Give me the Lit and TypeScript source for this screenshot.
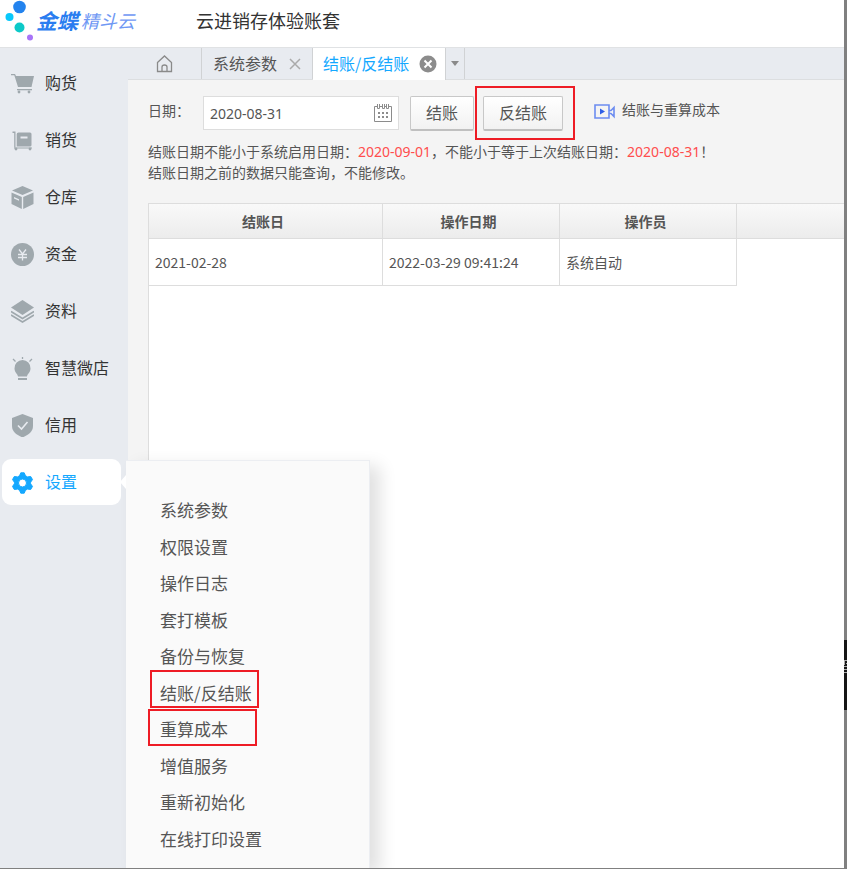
import { LitElement, html, css, svg, nothing } from "lit";
import { customElement, state } from "lit/decorators.js";
import { classMap } from "lit/directives/class-map.js";

const icons = {
  cart: svg`<path d="M0 2h4l1 2h18l-2.500 11H7L3.300 3.300H0z"/><path d="M6 17h15v1.300H6z"/><circle cx="8" cy="20" r="1.400"/><circle cx="18" cy="20" r="1.400"/>`,
  trolley: svg`<path d="M1.500 2.500h3v16H3.200V4H1.500z"/><path fill-rule="evenodd" d="M7.500 3.500h11.500q1.500 0 1.500 1.500v11q0 1.500-1.500 1.500H5.700V5.300q0-1.800 1.800-1.800zM9.500 7.500v2h7v-2z"/><path d="M3 18.500h18v1H3z"/><circle cx="5" cy="20" r="1.400"/><circle cx="19" cy="20" r="1.400"/>`,
  box: svg`<path d="M11.500 0 22 4.500 11.500 9 1 4.500z"/><path fill-rule="evenodd" d="M.5 6.500l10.300 4.500v12L.5 18zM3 12.500l5 2.300v-1.500L3 11z"/><path d="M22.500 6.500l-10.300 4.500v12l10.300-5z"/>`,
  money: svg`<circle cx="11.500" cy="11.500" r="11.500"/><path d="M8 6.500l3.500 4.500L15 6.500M7 11.500h9M7 14.500h9M11.500 11v6.500" fill="none" stroke="#e8ebf0" stroke-width="1.300"/>`,
  layers: svg`<path d="M11.500 0 23 7.500 11.500 15 0 7.500z"/><path d="M0 11.500l11.500 7 11.500-7M0 15l11.500 7L23 15" fill="none" stroke="currentColor" stroke-width="1.600"/>`,
  bulb: svg`<path d="M11.500 3a8 8 0 0 1 8 8.500c0 4-3 5-3.500 8H7c-.5-3-3.500-4-3.500-8a8 8 0 0 1 8-8.500zM7 21h9v2H7z"/><path d="M11.500 0v2M2 2l2.500 2.500M21 2l-2.500 2.500" stroke="currentColor" stroke-width="1.300"/>`,
  shield: svg`<path d="M11.500 0 22 4v8c0 6-5 9-10.500 11.500C6 21 1 18 1 12V4z"/><path d="M7 11.500l3.500 3.500L16.500 8" fill="none" stroke="#e8ebf0" stroke-width="1.600"/>`,
  gear: svg`<path fill-rule="evenodd" d="M9.800 1.800h3.400l1.300 3 2 1.100 3.200-.4 1.800 3.100-1.900 2.600v1.600l1.900 2.600-1.800 3.100-3.200-.4-2 1.100-1.300 3H9.800l-1.300-3-2-1.100-3.200.4-1.800-3.100 1.900-2.600v-1.600L1.500 8.600l1.800-3.100 3.200.4 2-1.100zM11.500 8a4 4 0 1 0 0 8 4 4 0 0 0 0-8z" stroke="currentColor" stroke-width="1" stroke-linejoin="round"/>`,
};

const sections = [
  { label: "购货", icon: icons.cart },
  { label: "销货", icon: icons.trolley },
  { label: "仓库", icon: icons.box },
  { label: "资金", icon: icons.money },
  { label: "资料", icon: icons.layers },
  { label: "智慧微店", icon: icons.bulb },
  { label: "信用", icon: icons.shield },
  { label: "设置", icon: icons.gear },
];

const settings = [
  { label: "系统参数" },
  { label: "权限设置" },
  { label: "操作日志" },
  { label: "套打模板" },
  { label: "备份与恢复" },
  { label: "结账/反结账", mark: "mark upper" },
  { label: "重算成本", mark: "mark lower" },
  { label: "增值服务" },
  { label: "重新初始化" },
  { label: "在线打印设置" },
];

const rows = [["2021-02-28", "2022-03-29 09:41:24", "系统自动"]];

@customElement("app-root")
export class AppRoot extends LitElement {
  @state() private active = "设置";

  static styles = css`
    :host {
      display: flex;
      flex-direction: column;
      position: relative;
      box-sizing: border-box;
      min-height: 100vh;
      border-right: 3px solid #808080;
      border-bottom: 1px solid #808080;
      background: #fff;
      color: #555;
      font: 14px/20px "Noto Sans CJK SC", sans-serif;
    }
    *, *::before, *::after { box-sizing: border-box; }
    button, input { font: inherit; color: inherit; margin: 0; }
    button { cursor: pointer; }
    a { color: inherit; text-decoration: none; }
    svg { display: block; flex: none; }
    ul { list-style: none; margin: 0; padding: 0; }

    header {
      display: flex;
      align-items: center;
      height: 48px;
      padding-bottom: 8px;
      border-bottom: 1px solid #e0e2e4;
    }
    .brand { display: flex; align-items: center; width: 196px; padding-left: 4px; font-style: italic; }
    .brand svg { margin-top: 2px; }
    .brand strong { margin-left: 2px; font-size: 21px; line-height: 40px; color: #2a7df0; }
    .brand span { margin-left: 3px; font-size: 18px; line-height: 40px; color: #6f98f4; }
    h1 { margin: 0; font-size: 18px; line-height: 40px; font-weight: 400; color: #333; }

    .body { display: flex; flex: 1; }
    aside { position: relative; flex: none; width: 128px; padding: 12px 7px 0 2px; background: #e8ebf0; }
    .sections { display: grid; gap: 11px; }
    .section {
      display: flex;
      align-items: center;
      gap: 11px;
      height: 46px;
      padding: 0 0 2px 9px;
      border-radius: 9px;
      font-size: 16px;
      color: #333;
    }
    .section svg { margin-top: 2px; color: #9fa8ad; }
    .section.active { background: #fff; color: #14a8ff; }
    .section.active svg { color: #14a8ff; }

    .menu {
      position: absolute;
      z-index: 2;
      left: 126px;
      top: 412px;
      bottom: 0;
      width: 244px;
      padding: 31px 0 0 34px;
      border: 1px solid #eceef2;
      border-width: 1px 1px 0 0;
      background: #fafafa;
      box-shadow: 10px 6px 16px rgba(0, 0, 0, 0.12);
      clip-path: inset(-20px -40px 0 -10px);
      font-size: 17px;
    }
    .menu::before {
      content: "";
      position: absolute;
      left: -6px;
      top: 14px;
      border: 7px solid transparent;
      border-left-width: 0;
      border-right: 6px solid #fff;
    }
    .menu ul { display: grid; grid-auto-rows: 1fr; height: 365px; }
    .menu li { display: flex; align-items: center; position: relative; }
    .mark::after {
      content: "";
      position: absolute;
      width: 109px;
      height: 38px;
      border: 2px solid #ee1c25;
      pointer-events: none;
    }
    .upper::after { left: -10px; bottom: 3px; }
    .lower::after { left: -12px; bottom: 2px; height: 37px; }

    main { display: flex; flex-direction: column; flex: 1; min-width: 0; background: #f4f4f4; }
    .tabs {
      display: flex;
      height: 32px;
      border-bottom: 1px solid #dcdee0;
      background: #e8ebf0;
      font-size: 16px;
    }
    .tab { display: flex; align-items: center; border-right: 1px solid #d0d2d4; }
    .tab button { display: flex; padding: 0; border: 0; background: none; }
    .tab .name { padding-bottom: 2px; }
    .home { width: 74px; padding-left: 28px; }
    .params { width: 111px; padding-left: 11px; gap: 12px; }
    .current { height: 32px; width: 133px; padding-left: 10px; gap: 10px; background: #fff; color: #14a8ff; }
    .more { width: 19px; justify-content: center; }

    .toolbar { display: flex; align-items: center; height: 36px; margin: 15px 0 0 20px; }
    .toolbar label { width: 55px; padding-bottom: 6px; }
    .date { display: flex; position: relative; width: 196px; }
    .date input {
      width: 100%;
      height: 34px;
      padding: 0 32px 0 6px;
      border: 1px solid #ddd;
      background: #fff;
      font-family: "Noto Sans", sans-serif;
      outline: none;
    }
    .date svg { position: absolute; right: 7px; top: 7px; }
    .action {
      height: 35px;
      margin-left: 11px;
      padding: 0 15px;
      border: 1px solid #c8c8c8;
      border-bottom: 2px solid #c0c0c0;
      border-radius: 2px;
      background: linear-gradient(#fff, #f2f2f2);
      font-size: 16px;
      line-height: 30px;
      padding-bottom: 4px;
    }
    .undo { position: relative; margin-left: 9px; }
    .undo::after {
      content: "";
      position: absolute;
      inset: -11px -13px -11px -9px;
      border: 2px solid #ee1c25;
      pointer-events: none;
    }
    .video { display: flex; align-items: center; gap: 7px; margin-left: 31px; padding-bottom: 8px; }
    .video svg { margin-top: 4px; }
    .notice { margin: 10px 0 21px 20px; }
    .notice p { margin: 0; }
    .notice em { font-style: normal; font-family: "Noto Sans", sans-serif; color: #ff4d4d; }

    .grid { flex: 1; margin-left: 20px; border: 1px solid #ddd; border-width: 1px 0 0 1px; background: #fff; }
    table { width: 100%; table-layout: fixed; border-collapse: separate; border-spacing: 0; }
    th, td { padding: 0 6px; border: 1px solid #ddd; border-width: 0 1px 1px 0; }
    th { height: 35px; padding-right: 11px; background: linear-gradient(#f9f9f9, #ececec); color: #555; }
    td { height: 47px; }
    th:last-child { border-right: 0; }
    td:last-child { border: 0; }
    .wide { width: 234px; }
    .mid { width: 177px; }

    .handle {
      position: absolute;
      right: -3px;
      top: 640px;
      width: 3px;
      height: 70px;
      background: #161616;
    }
    .handle svg { margin-top: 19px; }
  `;

  private section(s: (typeof sections)[number]) {
    return html`<li>
      <a href="#" class=${classMap({ section: true, active: s.label === this.active })}
        @click=${(e: Event) => { e.preventDefault(); this.active = s.label; }}>
        <svg width="23" height="23" viewBox="0 0 23 23" fill="currentColor">${s.icon}</svg>${s.label}
      </a>
    </li>`;
  }

  render() {
    return html`
      <header>
        <div class="brand">
          <svg width="30" height="42" viewBox="0 0 30 42">
            <circle cx="15.500" cy="7" r="6.300" fill="#2383ee" />
            <circle cx="5.500" cy="17" r="4" fill="#08c8fb" />
            <circle cx="15.500" cy="27.500" r="5" fill="#0cc9c8" />
            <circle cx="26" cy="37.500" r="3" fill="#a874f8" />
          </svg>
          <strong>金蝶</strong><span>精斗云</span>
        </div>
        <h1>云进销存体验账套</h1>
      </header>
      <div class="body">
        <aside>
          <ul class="sections">${sections.map((s) => this.section(s))}</ul>
          ${this.active === "设置"
            ? html`<nav class="menu" aria-label="设置">
                <ul>${settings.map((m) => html`<li class=${m.mark ?? nothing}><a href="#">${m.label}</a></li>`)}</ul>
              </nav>`
            : nothing}
        </aside>
        <main>
          <div class="tabs">
            <div class="tab home">
              <button aria-label="首页">
                <svg width="17" height="18" viewBox="0 0 17 18" fill="none" stroke="#8a8a8a" stroke-width="1.300">
                  <path d="M1.500 7.500 8.500 1l7 6.500V16.500h-14zM6 16.500v-4.500q0-2 2.500-2t2.500 2v4.500" />
                </svg>
              </button>
            </div>
            <div class="tab params">
              <button class="name">系统参数</button>
              <button aria-label="关闭系统参数">
                <svg width="12" height="12" viewBox="0 0 12 12" stroke="#aaa" stroke-width="1.500"><path d="M1 1l10 10M11 1 1 11" /></svg>
              </button>
            </div>
            <div class="tab current">
              <button class="name">结账/反结账</button>
              <button aria-label="关闭结账">
                <svg width="18" height="18" viewBox="0 0 18 18"><circle cx="9" cy="9" r="8.500" fill="#8c8c8c" /><path d="M5.500 5.500l7 7M12.500 5.500l-7 7" stroke="#fff" stroke-width="2" /></svg>
              </button>
            </div>
            <div class="tab more">
              <button aria-label="更多">
                <svg width="8" height="5" viewBox="0 0 8 5"><path d="M0 0h8L4 5z" fill="#8a8a8a" /></svg>
              </button>
            </div>
          </div>
          <div class="toolbar">
            <label for="date">日期：</label>
            <div class="date">
              <input id="date" type="text" .value=${"2020-08-31"} />
              <svg width="18" height="19" viewBox="0 0 18 19" fill="none" stroke="#8c8c8c">
                <path d="M3 3.500H.5v15h17v-15H15M6 3.500h2M11 3.500h1M3.500 1v4.500h2V1M8.500 1v4.500h2V1M12.500 1v4.500h2V1" />
                <path d="M4 10h2M8 10h2M12 10h2M4 14h2M8 14h2M12 14h2" stroke-width="2" />
              </svg>
            </div>
            <button class="action">结账</button>
            <button class="action undo">反结账</button>
            <a class="video" href="#">
              <svg width="21" height="15" viewBox="0 0 21 15" fill="none" stroke="#6c8cf0" stroke-width="1.600">
                <path d="M1 1h14v13H1zM15 6.500l2 0 3-3v9l-3-3h-2" /><path d="M6 4.500v6l5-3z" fill="#2f5fe6" stroke="none" />
              </svg>
              结账与重算成本
            </a>
          </div>
          <div class="notice">
            <p>结账日期不能小于系统启用日期：<em>2020-09-01</em>，不能小于等于上次结账日期：<em>2020-08-31</em>！</p>
            <p>结账日期之前的数据只能查询，不能修改。</p>
          </div>
          <div class="grid">
            <table>
              <thead>
                <tr><th class="wide">结账日</th><th class="mid">操作日期</th><th class="mid">操作员</th><th></th></tr>
              </thead>
              <tbody>
                ${rows.map((r) => html`<tr>${r.map((c) => html`<td>${c}</td>`)}<td></td></tr>`)}
              </tbody>
            </table>
          </div>
        </main>
      </div>
      <div class="handle">
        <svg width="3" height="14" viewBox="0 0 3 14" stroke="#aaa"><path d="M0 1.500h3M.5 1v5M2 4.500h1M0 7.500h3M0 10.500h3M0 13.500h3" /></svg>
      </div>
    `;
  }
}
